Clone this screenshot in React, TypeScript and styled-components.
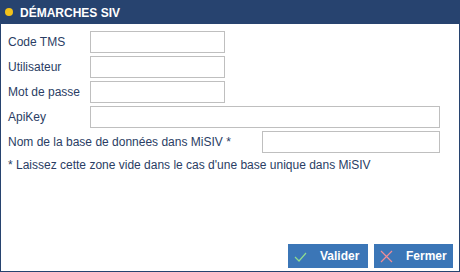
import React from "react";
import styled, { createGlobalStyle } from "styled-components";

const Global = createGlobalStyle`
  html, body { margin: 0; padding: 0; background: #fff; }
  * { box-sizing: border-box; }
`;

const Dialog = styled.div`
  width: 460px;
  height: 272px;
  border: 1px solid #27436f;
  display: flex;
  flex-direction: column;
  font-family: "Liberation Sans", Arial, sans-serif;
  font-size: 12px;
  color: #2a3d64;
  background: #fff;
`;

const Header = styled.div`
  height: 23px;
  background: #27436f;
  display: flex;
  align-items: center;
  padding-left: 4px;
  gap: 7px;
  color: #fff;
  font-weight: bold;
  font-size: 12px;
`;

const Dot = styled.span`
  width: 8px;
  height: 8px;
  border-radius: 50%;
  background: #f2c21b;
  margin-top: -1px;
`;

const Body = styled.div`
  flex: 1;
  padding: 7px 19px 0 7px;
  display: flex;
  flex-direction: column;
  gap: 3px;
`;

const Row = styled.div`
  display: flex;
  align-items: center;
  height: 22px;
`;

const Label = styled.label<{ $w: number }>`
  width: ${(p) => p.$w}px;
  flex-shrink: 0;
  line-height: 14px;
`;

const Input = styled.input<{ $w?: number }>`
  height: 22px;
  width: ${(p) => (p.$w ? `${p.$w}px` : "auto")};
  flex: ${(p) => (p.$w ? "0 0 auto" : "1")};
  border: 1px solid #bfbfbf;
  padding: 0 3px;
  font-family: inherit;
  font-size: 12px;
  outline: none;
  margin: 0;
`;

const Note = styled.div`
  margin-top: 1px;
  line-height: 16px;
`;

const Footer = styled.div`
  display: flex;
  justify-content: flex-end;
  gap: 6px;
  padding: 0 6px 3px 0;
`;

const Button = styled.button<{ $w: number }>`
  width: ${(p) => p.$w}px;
  height: 24px;
  border: none;
  background: #3b76b7;
  color: #fff;
  font-family: "Liberation Sans", Arial, sans-serif;
  font-weight: bold;
  font-size: 12px;
  display: flex;
  align-items: center;
  padding: 0 0 0 6px;
  gap: 13px;
  cursor: pointer;
`;

const Check = () => (
  <svg width="13" height="13" viewBox="0 0 13 13">
    <path d="M1 7 L5 11 L12 3" fill="none" stroke="#8fdc8f" strokeWidth="1.2" />
  </svg>
);

const Cross = () => (
  <svg width="13" height="13" viewBox="0 0 13 13">
    <path d="M1 1 L12 12 M12 1 L1 12" fill="none" stroke="#f08c96" strokeWidth="1.2" />
  </svg>
);

export default function App() {
  return (
    <>
      <Global />
      <Dialog>
        <Header>
          <Dot />
          <span>DÉMARCHES SIV</span>
        </Header>
        <Body>
          <Row>
            <Label $w={82}>Code TMS</Label>
            <Input $w={135} />
          </Row>
          <Row>
            <Label $w={82}>Utilisateur</Label>
            <Input $w={135} />
          </Row>
          <Row>
            <Label $w={82}>Mot de passe</Label>
            <Input $w={135} type="password" />
          </Row>
          <Row>
            <Label $w={82}>ApiKey</Label>
            <Input />
          </Row>
          <Row>
            <Label $w={254}>Nom de la base de données dans MiSIV *</Label>
            <Input />
          </Row>
          <Note>* Laissez cette zone vide dans le cas d'une base unique dans MiSIV</Note>
        </Body>
        <Footer>
          <Button $w={80}>
            <Check />
            Valider
          </Button>
          <Button $w={79}>
            <Cross />
            Fermer
          </Button>
        </Footer>
      </Dialog>
    </>
  );
}
